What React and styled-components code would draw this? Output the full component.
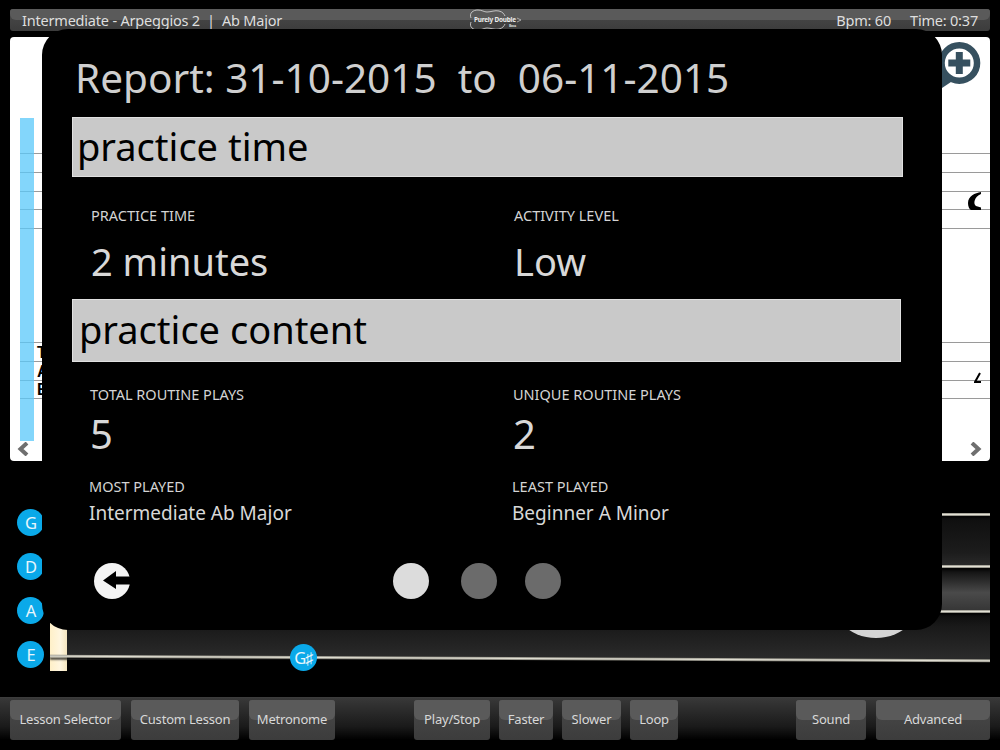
import React from 'react'
import styled, { createGlobalStyle } from 'styled-components'

const FONT = '"Noto Sans", "Open Sans", sans-serif'

const GlobalStyle = createGlobalStyle`
  html, body {
    margin: 0;
    background: #000;
    font-family: ${FONT};
  }
`

const Page = styled.div`
  position: relative;
  width: 1000px;
  height: 750px;
  overflow: hidden;
  background: #000;
  display: flex;
  flex-direction: column;
  padding-top: 9px;
  box-sizing: border-box;
  & > * {
    flex-shrink: 0;
  }
`

const glossy = `
  position: relative;
  background: linear-gradient(#4a4a4a, #3c3c3c);
  &::before {
    content: "";
    position: absolute;
    left: 0;
    right: 0;
    top: 0;
    height: 50%;
    background: #5a5a5a;
    border-radius: 3px 3px 6px 6px;
  }
  & > * {
    position: relative;
  }
`

const TopBar = styled.header`
  ${glossy}
  height: 22px;
  margin: 0 10px;
  border-radius: 3px;
  display: flex;
  align-items: center;
  justify-content: space-between;
  padding: 0 12px;
  color: #dedede;
  font-size: 14.5px;
  letter-spacing: -0.2px;
`

const Logo = styled.svg`
  position: absolute !important;
  left: 449px;
  top: 0;
  width: 64px;
  height: 22px;
`

const TopRight = styled.div`
  display: flex;
  gap: 19px;
`

const Sheet = styled.section`
  position: relative;
  height: 424px;
  margin: 6px 10px 0;
  background: #fff;
  border-radius: 4px;
  overflow: hidden;
`

const Staff = styled.div`
  position: absolute;
  left: 10px;
  right: 0;
  top: ${(p) => p.$top}px;
  display: flex;
  flex-direction: column;
  gap: 17.8px;
`

const StaffLine = styled.div`
  height: 1px;
  background: #9a9a9a;
`

const Playhead = styled.div`
  position: absolute;
  left: 10px;
  top: 81px;
  width: 14px;
  height: 323px;
  background: rgba(90, 200, 250, 0.75);
`

const TabLetters = styled.div`
  position: absolute;
  left: 27px;
  top: 307px;
  display: flex;
  flex-direction: column;
  font: bold 16px/18.5px "Liberation Sans", sans-serif;
  color: #000;
`

const SheetIcon = styled.svg`
  position: absolute;
  left: ${(p) => p.$left}px;
  top: ${(p) => p.$top}px;
`

const Fretboard = styled.section`
  position: relative;
  height: 170px;
  margin-top: 49px;
`

const NoteBadge = styled.div`
  position: absolute;
  left: ${(p) => p.$left}px;
  top: ${(p) => p.$top}px;
  width: 27px;
  height: 27px;
  border-radius: 50%;
  background: #0aa9e9;
  color: #e8f6fc;
  font-size: 16.5px;
  letter-spacing: -1px;
  display: flex;
  align-items: center;
  justify-content: center;
  z-index: 3;
`

const Strings = styled.div`
  position: absolute;
  left: 50px;
  right: 10px;
  top: 3px;
  display: flex;
  flex-direction: column;
`

const StringBand = styled.div`
  height: ${(p) => p.$height}px;
  background: ${(p) => p.$bg};
  box-sizing: border-box;
  display: flex;
  align-items: flex-end;
`

const Wire = styled.div`
  position: relative;
  z-index: 2;
  width: 100%;
  height: 3px;
  background: linear-gradient(#8c8a80, #e2e0d4 50%, #77756c);
  box-shadow: 0 2px 2px rgba(0, 0, 0, 0.7);
  transform: rotate(${(p) => p.$tilt || 0}deg);
`

const Nut = styled.div`
  position: absolute;
  left: 50px;
  top: 112px;
  width: 17px;
  height: 49px;
  background: linear-gradient(90deg, #fff0c8, #fff6e0 60%, #f5e6c0);
  z-index: 1;
`

const Knob = styled.div`
  position: absolute;
  left: 826px;
  top: 28px;
  width: 100px;
  height: 100px;
  border-radius: 50%;
  background: #d4d4d4;
`

const ToolBar = styled.footer`
  margin-top: 17px;
  height: 53px;
  padding: 2px 10px 0;
  box-sizing: border-box;
  border-top: 1px solid #3c3c3c;
  background: linear-gradient(#383838, #1a1a1a 55%, #000 80%);
  display: flex;
`

const ButtonGroup = styled.div`
  display: flex;
  gap: ${(p) => p.$gap}px;
  margin-left: ${(p) => p.$offset || 0}px;
`

const ToolButton = styled.button`
  ${glossy}
  width: ${(p) => p.$width}px;
  height: 40px;
  padding: 0 0 2px;
  border: 0;
  border-radius: 3px;
  color: #d8d8d8;
  font-family: ${FONT};
  font-size: 13px;
  letter-spacing: -0.2px;
`

const Modal = styled.div`
  position: absolute;
  left: 42px;
  top: 29px;
  width: 900px;
  height: 601px;
  background: #000;
  border-radius: 26px;
  box-sizing: border-box;
  padding-left: 30px;
  z-index: 5;
`

const Title = styled.h1`
  margin: 0;
  height: 88px;
  padding: 24px 0 0 3px;
  box-sizing: border-box;
  font-size: 40.5px;
  line-height: 50px;
  font-weight: 400;
  color: #cfcfcf;
  white-space: pre;
`

const SectionBar = styled.div`
  width: ${(p) => p.$width}px;
  height: ${(p) => p.$height}px;
  box-sizing: border-box;
  background: #c9c9c9;
  border: 1px solid #e0e0e0;
  color: #000;
  font-size: 38px;
  line-height: ${(p) => p.$height - 4}px;
  padding-left: ${(p) => p.$indent}px;
`

const StatGrid = styled.div`
  display: grid;
  grid-template-columns: 423px 1fr;
  padding-left: ${(p) => p.$indent}px;
  height: ${(p) => p.$height}px;
  box-sizing: border-box;
  padding-top: ${(p) => p.$top}px;
`

const Stat = styled.div`
  display: flex;
  flex-direction: column;
`

const StatLabel = styled.div`
  font-size: 14.5px;
  line-height: 20px;
  color: #d4d4d4;
`

const StatValue = styled.div`
  font-size: ${(p) => p.$size}px;
  line-height: ${(p) => p.$line}px;
  color: #d8d8d8;
  margin-top: ${(p) => p.$gap || 0}px;
`

const ModalFooter = styled.div`
  display: flex;
  align-items: flex-start;
  padding: 28px 0 0 21px;
`

const PagerDots = styled.div`
  display: flex;
  margin: 1px 0 0 262px;
`

const Dot = styled.div`
  width: 36px;
  height: 36px;
  border-radius: 50%;
  margin-left: ${(p) => p.$gap || 0}px;
  background: ${(p) => (p.$active ? '#dcdcdc' : '#6b6b6b')};
`

const staffRows = [116, 305]
const noteRows = [
  { name: 'G', top: -1.5 },
  { name: 'D', top: 42.5 },
  { name: 'A', top: 86.5 },
  { name: 'E', top: 130.5 },
]

const leftButtons = [
  ['Lesson Selector', 111],
  ['Custom Lesson', 108],
  ['Metronome', 86],
]
const middleButtons = [
  ['Play/Stop', 76],
  ['Faster', 54],
  ['Slower', 59],
  ['Loop', 48],
]
const rightButtons = [
  ['Sound', 70],
  ['Advanced', 114],
]

const App = () => {
  return (
    <Page>
      <GlobalStyle />
      <TopBar>
        <span>Intermediate - Arpeggios 2&nbsp; |&nbsp; Ab Major</span>
        <Logo viewBox="0 0 64 22">
          <path
            d="M12 9 C10 4 14 1 19 1 C23 1 25 3 28 3 C32 3 36 1 40 2 C44 3 45 5 46 7 M12 13 C10 18 14 21 19 21 C23 21 25 19 28 19 C32 19 36 21 40 20 C44 19 45 17 46 15"
            fill="none"
            stroke="#ddd"
            strokeWidth="0.8"
          />
          <text x="15" y="13" fill="#eee" fontSize="6.4" fontWeight="700" fontFamily="Noto Sans, sans-serif">
            Purely Double
          </text>
          <text x="50" y="18" fill="#ddd" fontSize="3.4" fontWeight="700" fontFamily="Noto Sans, sans-serif">
            Bass
          </text>
          <path d="M58 9 L62 11 L58 13" fill="none" stroke="#ccc" strokeWidth="0.7" />
        </Logo>
        <TopRight>
          <span>Bpm: 60</span>
          <span>Time: 0:37</span>
        </TopRight>
      </TopBar>

      <Sheet>
        {staffRows.map((top) => (
          <Staff key={top} $top={top}>
            {[0, 1, 2, 3, 4].map((n) => (top === 305 && n === 4 ? null : <StaffLine key={n} />))}
          </Staff>
        ))}
        <Playhead />
        <TabLetters>
          <span>T</span>
          <span>A</span>
          <span>B</span>
        </TabLetters>
        <SheetIcon $left={925} $top={3} width="48" height="50" viewBox="0 0 48 50">
          <path d="M7 30 L7 48 L22 38 Z" fill="#36505f" />
          <circle cx="24.3" cy="23" r="17.75" fill="#fff" stroke="#36505f" strokeWidth="6.5" />
          <path d="M24.3 12 V34 M13.3 23 H35.3" stroke="#36505f" strokeWidth="7" />
        </SheetIcon>
        <SheetIcon $left={958} $top={155} width="14" height="19" viewBox="0 0 14 19">
          <path d="M13 0 C7 1 0 4 0 11 C0 14 1 17 3 18 L13 18 L13 15.5 L8 14 C5 12 6 5 13 2 Z" fill="#000" />
        </SheetIcon>
        <SheetIcon $left={964} $top={335} width="8" height="12" viewBox="0 0 8 12">
          <path d="M6 1 L1 10 H7" fill="none" stroke="#000" strokeWidth="2" />
        </SheetIcon>
        <SheetIcon $left={7} $top={405} width="14" height="14" viewBox="0 0 14 14">
          <path d="M10 1 L3.5 7 L10 13" fill="none" stroke="#6f6f6f" strokeWidth="4" />
        </SheetIcon>
        <SheetIcon $left={958} $top={405} width="14" height="14" viewBox="0 0 14 14">
          <path d="M4 1 L10.5 7 L4 13" fill="none" stroke="#6f6f6f" strokeWidth="4" />
        </SheetIcon>
      </Sheet>

      <Fretboard>
        <Strings>
          <StringBand $height={3} $bg="transparent">
            <Wire />
          </StringBand>
          <StringBand $height={52} $bg="linear-gradient(#0e0e0e, #1c1c1c 70%, #2c2c2c)">
            <Wire />
          </StringBand>
          <StringBand $height={45} $bg="linear-gradient(#0a0a0a, #1c1c1c 15%, #4a4a4a 55%, #333)">
            <Wire />
          </StringBand>
          <StringBand $height={47} $bg="linear-gradient(#0c0c0c, #1a1a1a 30%, #2a2a2a 95%)">
            <Wire $tilt={0.285} />
          </StringBand>
        </Strings>
        <Knob />
        <Nut />
        {noteRows.map((note) => (
          <NoteBadge key={note.name} $left={17} $top={note.top}>
            {note.name}
          </NoteBadge>
        ))}
        <NoteBadge $left={290} $top={133.5}>
          G♯
        </NoteBadge>
      </Fretboard>

      <ToolBar>
        <ButtonGroup $gap={10}>
          {leftButtons.map(([label, width]) => (
            <ToolButton key={label} $width={width}>
              <span>{label}</span>
            </ToolButton>
          ))}
        </ButtonGroup>
        <ButtonGroup $gap={9} $offset={79}>
          {middleButtons.map(([label, width]) => (
            <ToolButton key={label} $width={width}>
              <span>{label}</span>
            </ToolButton>
          ))}
        </ButtonGroup>
        <ButtonGroup $gap={10} $offset={118}>
          {rightButtons.map(([label, width]) => (
            <ToolButton key={label} $width={width}>
              <span>{label}</span>
            </ToolButton>
          ))}
        </ButtonGroup>
      </ToolBar>

      <Modal>
        <Title>{'Report: 31-10-2015  to  06-11-2015'}</Title>
        <SectionBar $width={831} $height={60} $indent={4}>
          practice time
        </SectionBar>
        <StatGrid $indent={19} $height={122} $top={28}>
          <Stat>
            <StatLabel>PRACTICE TIME</StatLabel>
            <StatValue $size={38} $line={50} $gap={11}>
              2 minutes
            </StatValue>
          </Stat>
          <Stat>
            <StatLabel>ACTIVITY LEVEL</StatLabel>
            <StatValue $size={38} $line={50} $gap={11}>
              Low
            </StatValue>
          </Stat>
        </StatGrid>
        <SectionBar $width={829} $height={63} $indent={6}>
          practice content
        </SectionBar>
        <StatGrid $indent={18} $height={92} $top={22}>
          <Stat>
            <StatLabel>TOTAL ROUTINE PLAYS</StatLabel>
            <StatValue $size={40} $line={50} $gap={5}>
              5
            </StatValue>
          </Stat>
          <Stat>
            <StatLabel>UNIQUE ROUTINE PLAYS</StatLabel>
            <StatValue $size={40} $line={50} $gap={5}>
              2
            </StatValue>
          </Stat>
        </StatGrid>
        <StatGrid $indent={17} $height={80} $top={22}>
          <Stat>
            <StatLabel>MOST PLAYED</StatLabel>
            <StatValue $size={19} $line={30} $gap={2}>
              Intermediate Ab Major
            </StatValue>
          </Stat>
          <Stat>
            <StatLabel>LEAST PLAYED</StatLabel>
            <StatValue $size={19} $line={30} $gap={2}>
              Beginner A Minor
            </StatValue>
          </Stat>
        </StatGrid>
        <ModalFooter>
          <svg width="38" height="38" viewBox="0 0 38 38">
            <circle cx="19" cy="19" r="18" fill="#f4f4f4" />
            <path d="M10 18.5 L23 9 V14.5 H38 V22.5 H23 V27 Z" fill="#000" />
          </svg>
          <PagerDots>
            <Dot $active />
            <Dot $gap={32} />
            <Dot $gap={28} />
          </PagerDots>
        </ModalFooter>
      </Modal>
    </Page>
  )
}

export default App
